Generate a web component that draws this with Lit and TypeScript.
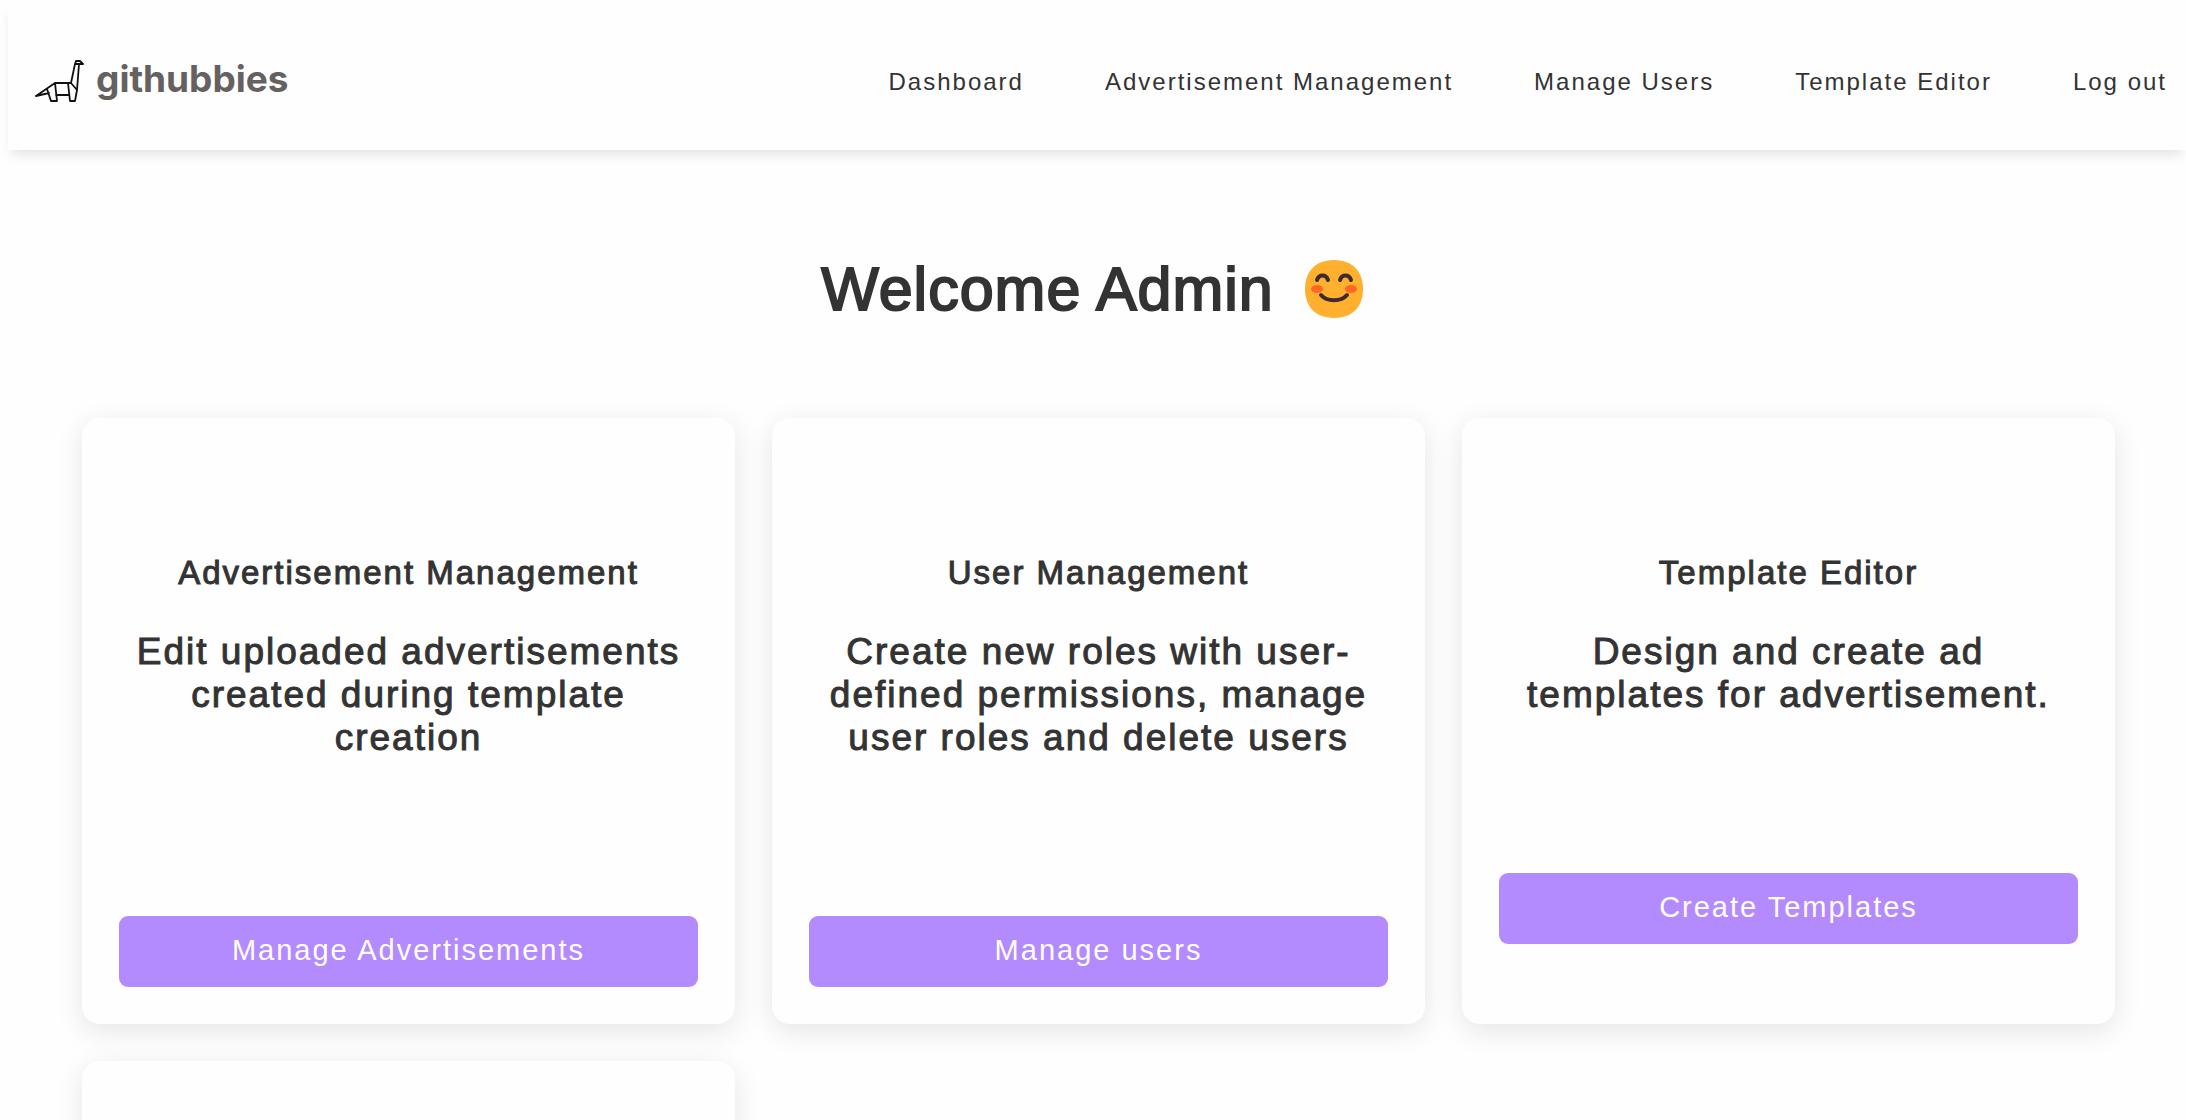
import { LitElement, html, css } from "lit";
import { customElement } from "lit/decorators.js";

interface Card {
  title: string;
  text: string;
  action: string;
}

const LINKS = ["Dashboard", "Advertisement Management", "Manage Users", "Template Editor", "Log out"];

const CARDS: Card[] = [
  {
    title: "Advertisement Management",
    text: "Edit uploaded advertisements created during template creation",
    action: "Manage Advertisements",
  },
  {
    title: "User Management",
    text: "Create new roles with user-defined permissions, manage user roles and delete users",
    action: "Manage users",
  },
  {
    title: "Template Editor",
    text: "Design and create ad templates for advertisement.",
    action: "Create Templates",
  },
];

@customElement("app-root")
export class AppRoot extends LitElement {
  static styles = css`
    :host {
      display: block;
      height: 100vh;
      overflow: hidden;
      background: #fefefe;
      color: #333;
      font-family: "Liberation Sans", Arial, sans-serif;
      letter-spacing: 2px;
    }
    * {
      box-sizing: border-box;
    }
    .bar {
      display: flex;
      align-items: center;
      justify-content: space-between;
      height: 150px;
      margin-left: 8px;
      padding: 14px 19px 0 26px;
      background: #fefefe;
      box-shadow: 0 8px 12px -4px rgba(0, 0, 0, 0.12);
    }
    .brand {
      display: flex;
      align-items: center;
      gap: 12px;
      padding-bottom: 2px;
      color: #656161;
      font: 700 37px/44px Inter, sans-serif;
      letter-spacing: normal;
      text-decoration: none;
    }
    .name {
      padding-bottom: 4px;
    }
    .dino {
      width: 50px;
      height: 46px;
    }
    .links {
      display: flex;
      gap: 81px;
      margin: 0;
      padding: 0;
      list-style: none;
      font-size: 24px;
      line-height: 28px;
    }
    .links a {
      color: inherit;
      text-decoration: none;
    }
    .welcome {
      display: flex;
      align-items: center;
      justify-content: center;
      gap: 29px;
      margin: 103px 0 93px;
      font-size: 61px;
      line-height: 72px;
      font-weight: 400;
      letter-spacing: 1px;
      -webkit-text-stroke: 2px #333;
    }
    .smile {
      width: 62px;
      height: 62px;
    }
    .grid {
      display: grid;
      grid-template-columns: repeat(3, 1fr);
      gap: 37px;
      margin: 0 71px 0 82px;
    }
    .card {
      min-height: 606px;
      padding: 135px 37px 37px;
      border-radius: 18px;
      background: #fefefe;
      box-shadow: 0 7px 28px rgba(0, 0, 0, 0.1);
      text-align: center;
    }
    .title,
    .text {
      margin: 0;
      font-weight: 400;
      -webkit-text-stroke: 1px #333;
    }
    .title {
      font-size: 33px;
      line-height: 40px;
    }
    .text {
      margin: 37px 0 157px;
      font-size: 37px;
      line-height: 43px;
    }
    .action {
      display: block;
      width: 100%;
      height: 71px;
      padding: 0 0 2px;
      border: 0;
      border-radius: 9px;
      background: #b38bff;
      color: #fff;
      font: inherit;
      font-size: 29px;
      letter-spacing: inherit;
    }
  `;

  private dino() {
    return html`<svg class="dino" viewBox="0 0 50 46" fill="none" stroke="#111" stroke-width="1.8" stroke-linejoin="round" stroke-linecap="round" aria-hidden="true">
      <path d="M2 38 21 25H37L43 32 45 6H41L37 25M41 6 42 3H46L49 6ZM43 32 41 43H36L34 25M21 25 23 43H17L13 31M2 38 15 35M22 37H35" />
    </svg>`;
  }

  private smile() {
    return html`<svg class="smile" viewBox="0 0 62 62" role="img" aria-label="Smiling face">
      <path fill="#ffb02e" d="M31 60C52 60 60 46 60 31S52 2 31 2 2 16 2 31s8 29 29 29Z" />
      <ellipse cx="14" cy="31" rx="6" ry="4" fill="#ff6723" />
      <ellipse cx="48" cy="31" rx="6" ry="4" fill="#ff6723" />
      <path d="M14 22c2-6 9-6 11 0M37 22c2-6 9-6 11 0M18 37c6 7 20 7 26 0" fill="none" stroke="#402a32" stroke-width="4" stroke-linecap="round" />
    </svg>`;
  }

  render() {
    return html`
      <header class="bar">
        <a class="brand" href="#">${this.dino()}<span class="name">githubbies</span></a>
        <nav>
          <ul class="links">
            ${LINKS.map((label) => html`<li><a href="#">${label}</a></li>`)}
          </ul>
        </nav>
      </header>
      <main>
        <h1 class="welcome"><span>Welcome Admin</span>${this.smile()}</h1>
        <section class="grid">
          ${CARDS.map(
            (card) => html`<article class="card">
              <h2 class="title">${card.title}</h2>
              <p class="text">${card.text}</p>
              <button class="action" type="button">${card.action}</button>
            </article>`
          )}
          <article class="card"></article>
        </section>
      </main>
    `;
  }
}
